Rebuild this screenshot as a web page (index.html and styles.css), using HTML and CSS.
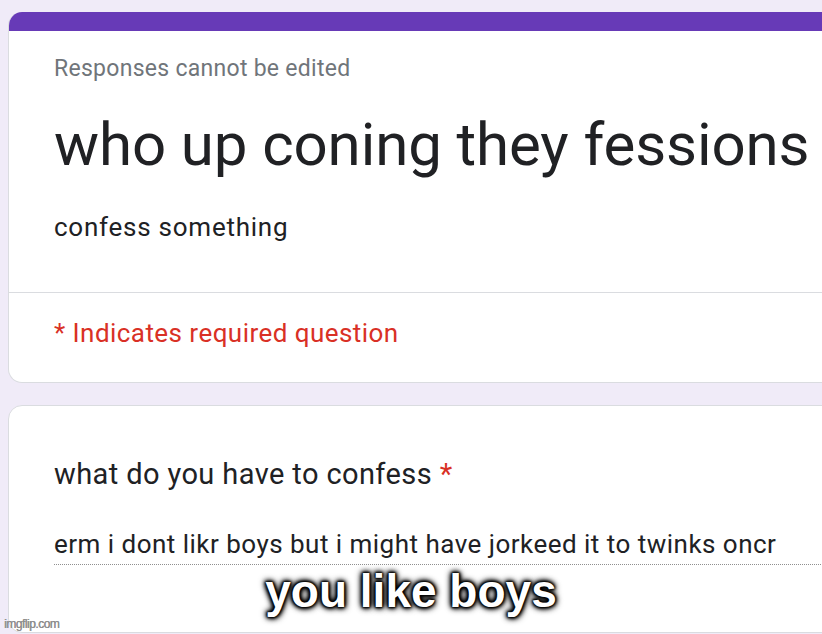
FILE: index.html
```html
<!DOCTYPE html>
<html lang="en">
<head>
<meta charset="utf-8">
<title>who up coning they fessions</title>
<link rel="stylesheet" href="styles.css">
</head>
<body>
<div class="page">
  <section class="card card-head">
    <div class="bar"></div>
    <div class="head-body">
      <p class="notice">Responses cannot be edited</p>
      <h1 class="title">who up coning they fessions</h1>
      <p class="desc">confess something</p>
    </div>
    <div class="divider"></div>
    <p class="req">* Indicates required question</p>
  </section>
  <section class="card card-q">
    <p class="question">what do you have to confess <span class="star">*</span></p>
    <div class="answer">erm i dont likr boys but i might have jorkeed it to twinks oncr</div>
  </section>
</div>
<div class="caption">you like boys</div>
<div class="watermark">imgflip.com</div>
</body>
</html>
```
FILE: styles.css
```css
html, body {
  margin: 0;
  padding: 0;
}
body {
  background: #f0ebf8;
  font-family: Roboto, "Noto Sans", "Liberation Sans", sans-serif;
  color: #202124;
  width: 822px;
  height: 634px;
  overflow: hidden;
  position: relative;
}
.page {
  padding: 12px 0 0 8px;
  height: 634px;
  box-sizing: border-box;
  overflow: hidden;
}
.card {
  width: 860px;
  box-sizing: border-box;
  background: #fff;
  border: 1px solid #dadce0;
  border-radius: 14px;
  overflow: hidden;
}
.card-head {
  border-top: 0;
}
.bar {
  height: 19px;
  background: #673ab7;
}
.head-body {
  padding: 23px 0 49px 45px;
}
.notice {
  margin: 0;
  font-size: 23px;
  line-height: 30px;
  letter-spacing: 0.28px;
  color: #70757a;
}
.title {
  margin: 25px 0 0;
  font-size: 60px;
  line-height: 72px;
  letter-spacing: -0.1px;
  font-weight: 400;
  color: #202124;
  white-space: nowrap;
}
.desc {
  margin: 30px 0 0;
  font-size: 26px;
  line-height: 32px;
  letter-spacing: 0.75px;
}
.divider {
  height: 1px;
  background: #dadce0;
}
.req {
  margin: 0;
  padding: 23px 0 32px 45px;
  font-size: 26px;
  line-height: 34px;
  letter-spacing: 0.45px;
  color: #d93025;
}
.card-q {
  margin-top: 22px;
  padding: 50px 0 67px 45px;
}
.question {
  margin: 0;
  font-size: 29px;
  line-height: 36px;
  letter-spacing: 0.4px;
}
.star {
  color: #d93025;
}
.answer {
  margin-top: 35px;
  padding-bottom: 3px;
  font-size: 26px;
  line-height: 34px;
  letter-spacing: 0.48px;
  border-bottom: 1px dotted #8f8f8f;
  white-space: nowrap;
}
.caption {
  position: absolute;
  left: 0;
  right: 0;
  top: 564px;
  text-align: center;
  font-family: "Liberation Sans", Arial, sans-serif;
  font-weight: 700;
  font-size: 46px;
  line-height: 54px;
  color: #fff;
  text-shadow: 0 0 2px #000, 0 0 2px #000, 0 0 3px #000, 0 0 4px #000, 0 0 5px #000, 1px 1px 7px #000, -1px -1px 7px #000;
}
.watermark {
  position: absolute;
  left: 4px;
  bottom: 3px;
  font-family: "Liberation Sans", Arial, sans-serif;
  font-size: 12px;
  line-height: 14px;
  letter-spacing: -0.5px;
  color: #8e8e8e;
  text-shadow: 0.4px 0 0 #8e8e8e;
}
```
